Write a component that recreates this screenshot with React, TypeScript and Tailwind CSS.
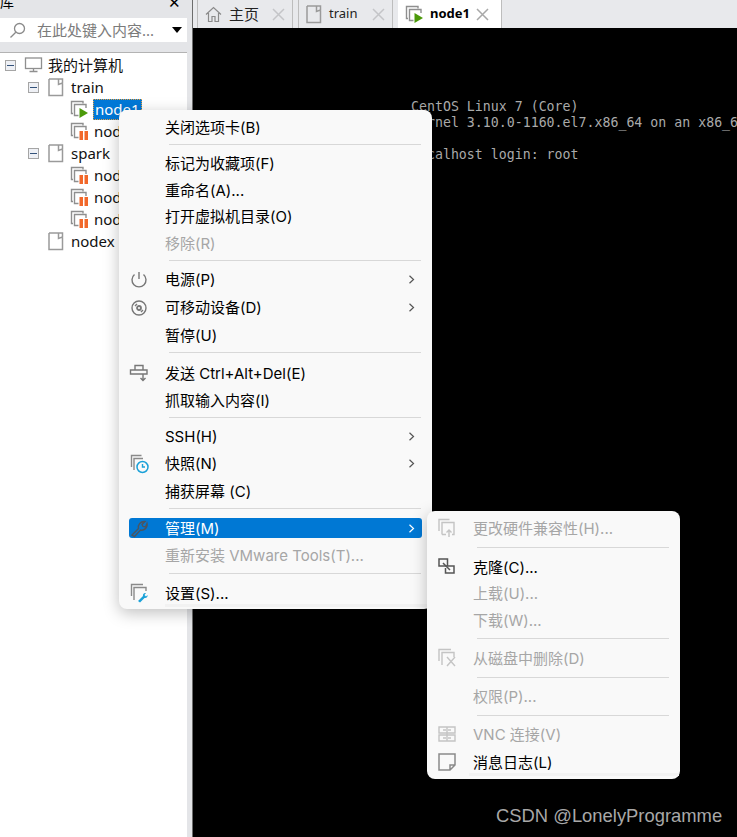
import type { ReactNode } from 'react'

const sans = "font-['Noto_Sans','Noto_Sans_CJK_SC',sans-serif]"
const menuFont = "font-['Inter','Noto_Sans_CJK_SC',sans-serif]"

function VmIcon({ state }: { state: 'run' | 'pause' | 'off' }) {
  return (
    <svg width="19" height="19" viewBox="0 0 19 19" className="shrink-0">
      <path d="M3 13.5H1.5V1.5H13V3.5" fill="none" stroke="#8f8f8f" strokeWidth="1.4" />
      <path d="M8.5 15.5H4.5V4.5H16V8" fill="none" stroke="#8f8f8f" strokeWidth="1.4" />
      {state === 'run' ? <path d="M9.5 8L18 13L9.5 18Z" fill="#4c9a0a" /> : null}
      {state === 'pause' ? (
        <>
          <rect x="9.5" y="9" width="3.5" height="9" fill="#f2682a" />
          <rect x="14.5" y="9" width="3.5" height="9" fill="#f2682a" />
        </>
      ) : null}
    </svg>
  )
}

function DocIcon() {
  return (
    <svg width="16" height="19" viewBox="0 0 16 19" className="shrink-0">
      <path d="M1 1H10.5V6.5L14.5 5V1H10.5M14.5 5V17.5H1V1" fill="none" stroke="#9a9a9a" strokeWidth="1.5" />
    </svg>
  )
}

function Expander() {
  return (
    <span className="flex h-[11px] w-[11px] shrink-0 items-center justify-center border border-[#a5a5a5] bg-[#eef0f5]">
      <span className="h-px w-[7px] bg-[#33527a]" />
    </span>
  )
}

function TreeRow({ pad, children }: { pad: string; children: ReactNode }) {
  return <div className={`flex h-[22px] items-center ${pad}`}>{children}</div>
}

function Sidebar() {
  return (
    <aside className="flex w-[193px] shrink-0 flex-col border-r border-r-[#6d6d6d] bg-[#e4e5e8]">
      <div className="flex h-[18px] items-start justify-between pr-[11px] text-[14px] leading-[12px] text-black">
        <span className="-mt-1">库</span>
        <span className="-mt-1 text-[15px]">✕</span>
      </div>
      <div className="mr-[5px] flex h-[24px] items-center bg-white pl-[9px] pr-[5px]">
        <svg width="17" height="17" viewBox="0 0 17 17" fill="none" stroke="#8a8a8a" strokeWidth="1.3">
          <circle cx="10.5" cy="6.5" r="5" />
          <path d="M6.8 10.2L1.5 15.5" />
        </svg>
        <span className="ml-[11px] flex-1 text-[15px] text-[#7b7b7b]">在此处键入内容...</span>
        <span className="h-0 w-0 border-x-[5.5px] border-t-[6px] border-x-transparent border-t-black" />
      </div>
      <div className="mr-[5px] mt-[10px] flex-1 overflow-hidden border-t border-t-[#b3b3b3] bg-white pt-px text-[15px] text-[#111]">
        <TreeRow pad="pl-[5px]">
          <Expander />
          <svg width="20" height="18" viewBox="0 0 20 18" fill="none" stroke="#8f8f8f" strokeWidth="1.3" className="ml-[8px]">
            <rect x="1.5" y="2" width="16" height="10.5" />
            <path d="M9.5 12.5V15.5M5.5 15.5H13.5" />
          </svg>
          <span className="ml-[4px]">我的计算机</span>
        </TreeRow>
        <TreeRow pad="pl-[28px]">
          <Expander />
          <span className="ml-[9px] flex"><DocIcon /></span>
          <span className="ml-[7px]">train</span>
        </TreeRow>
        <TreeRow pad="pl-[70px]">
          <VmIcon state="run" />
          <span className="ml-[4px] border border-dotted border-[#e8a040] bg-[#0078d7] px-px leading-[19px] text-white">node1</span>
        </TreeRow>
        <TreeRow pad="pl-[70px]">
          <VmIcon state="pause" />
          <span className="ml-[5px]">node2</span>
        </TreeRow>
        <TreeRow pad="pl-[28px]">
          <Expander />
          <span className="ml-[9px] flex"><DocIcon /></span>
          <span className="ml-[7px]">spark</span>
        </TreeRow>
        {['node3', 'node4', 'node5'].map((name) => (
          <TreeRow key={name} pad="pl-[70px]">
            <VmIcon state="pause" />
            <span className="ml-[5px]">{name}</span>
          </TreeRow>
        ))}
        <TreeRow pad="pl-[48px]">
          <DocIcon />
          <span className="ml-[7px]">nodex</span>
        </TreeRow>
      </div>
    </aside>
  )
}

function TabClose({ active }: { active?: boolean }) {
  return (
    <svg width="13" height="13" viewBox="0 0 13 13" stroke={active ? '#a8a8a8' : '#c4c5c8'} strokeWidth="1.5" className="shrink-0">
      <path d="M1 1L12 12M12 1L1 12" />
    </svg>
  )
}

function Tabs() {
  return (
    <div className="flex h-[28px] items-stretch bg-[#e8e9ec] pl-[4px] text-[15px] text-[#222]">
      <div className="flex w-[96px] items-center border-x border-x-[#bdbdbd] pl-[7px]">
        <svg width="17" height="17" viewBox="0 0 17 17" fill="none" stroke="#8a8a8a" strokeWidth="1.2">
          <path d="M1 8.5L8.5 1.5L16 8.5M3.5 7V15.5H7V10.5H10V15.5H13.5V7" />
        </svg>
        <span className="ml-[7px] w-[43px]">主页</span>
        <TabClose />
      </div>
      <div className="ml-[5px] flex w-[95px] items-center border-x border-x-[#bdbdbd] pl-[7px]">
        <DocIcon />
        <span className="ml-[7px] w-[43px] text-[13px]">train</span>
        <TabClose />
      </div>
      <div className="ml-[5px] flex w-[104px] items-center border-r border-r-[#bdbdbd] bg-white pl-[7px] font-bold text-black">
        <VmIcon state="run" />
        <span className="ml-[6px] w-[46px] text-[13px]">node1</span>
        <TabClose active />
      </div>
    </div>
  )
}

function Console() {
  return (
    <div className="flex-1 overflow-hidden whitespace-pre bg-black pl-[218px] pt-[71px] font-['DejaVu_Sans_Mono',monospace] text-[13.25px] leading-[16px] text-[#aaaaaa]">
      <div>CentOS Linux 7 (Core)</div>
      <div>Kernel 3.10.0-1160.el7.x86_64 on an x86_64</div>
      <div>&nbsp;</div>
      <div>localhost login: root</div>
    </div>
  )
}

function Sep({ h = 'h-[9.5px]' }: { h?: string }) {
  return (
    <div className={`flex items-center pl-[50px] pr-[11px] ${h}`}>
      <div className="h-px w-full bg-[#d8d8d8]" />
    </div>
  )
}

type ItemProps = {
  label: string
  icon?: ReactNode
  arrow?: boolean
  off?: boolean
  active?: boolean
  tall?: boolean
}

function Item({ label, icon, arrow, off, active, tall }: ItemProps) {
  const tone = active ? 'bg-[#0078d4] text-white' : off ? 'text-[#a6a6a6]' : 'text-black'
  const size = active ? 'my-[3.25px] h-[20px]' : tall ? 'h-[28px]' : 'h-[26.5px]'
  return (
    <div className={`mx-[10px] flex items-center rounded-[3px] ${size} ${tone}`}>
      <span className="flex w-[36px] shrink-0 items-center justify-start">{icon}</span>
      <span className="flex-1 whitespace-nowrap pt-[2px]">{label}</span>
      {arrow ? (
        <svg width="7" height="9" viewBox="0 0 7 9" fill="none" stroke={active ? '#fff' : '#555'} strokeWidth="1.2" className="mr-[7px]">
          <path d="M1.5 0.8L5.5 4.5L1.5 8.2" />
        </svg>
      ) : null}
    </div>
  )
}

function Glyph({ children }: { children: ReactNode }) {
  return (
    <svg width="20" height="20" viewBox="0 0 20 20" fill="none" stroke="#777" strokeWidth="1.4">
      {children}
    </svg>
  )
}

function MainMenu() {
  return (
    <div className={`absolute left-[119px] top-[110px] h-[499px] w-[313px] rounded-[8px] bg-[#f9f9f9] pt-[4px] text-[15px] shadow-[0_4px_16px_rgba(0,0,0,0.25)] ${menuFont}`}>
      <Item label="关闭选项卡(B)" />
      <Sep h="h-[9.5px] pb-[2px]" />
      <Item label="标记为收藏项(F)" />
      <Item label="重命名(A)..." />
      <Item label="打开虚拟机目录(O)" />
      <Item label="移除(R)" off />
      <Sep />
      <Item tall arrow label="电源(P)" icon={<Glyph><path d="M10 2V9" /><path d="M5.5 4.5A7 7 0 1 0 14.5 4.5" /></Glyph>} />
      <Item tall arrow label="可移动设备(D)" icon={<Glyph><circle cx="10" cy="10" r="7" /><circle cx="10" cy="10" r="2" strokeWidth="1.8" /><path d="M6 8L8 6M12 14L14 12" /></Glyph>} />
      <Item tall label="暂停(U)" />
      <Sep h="h-[9.5px] pb-[4px]" />
      <Item tall label="发送 Ctrl+Alt+Del(E)" icon={<Glyph><path d="M6 2.5H14V7H6ZM1.5 7H18V11H1.5ZM14 11V17M11.5 15L14 17.5L16.5 15" /></Glyph>} />
      <Item label="抓取输入内容(I)" />
      <Sep h="h-[9.5px] pb-[2px]" />
      <Item arrow label="SSH(H)" />
      <Item tall arrow label="快照(N)" icon={
        <Glyph>
          <path d="M2.5 13V1.5H12.5M5 16V4.5H14" stroke="#8a8a8a" />
          <circle cx="13.5" cy="13" r="5.5" stroke="#1ba1d8" strokeWidth="1.5" fill="#f9f9f9" />
          <path d="M13.5 10V13H16" stroke="#1ba1d8" />
        </Glyph>
      } />
      <Item tall label="捕获屏幕 (C)" />
      <Sep h="h-[9.5px] pb-[4px]" />
      <Item active arrow label="管理(M)" icon={
        <Glyph><path d="M3 17L9.5 10.5C8.5 7 11.5 3 16 3.5L13 6.5L14 8.5L16.5 9L18 5.5C19 9.5 15 13 11.5 12L5.5 18.5Z" stroke="#4a5560" /></Glyph>
      } />
      <Item off label="重新安装 VMware Tools(T)..." />
      <Sep h="h-[11px]" />
      <Item tall label="设置(S)..." icon={
        <Glyph>
          <path d="M2.5 13V1.5H14M5 17V4.5H17V8" stroke="#8a8a8a" />
          <path d="M9 18L14 13C13.5 11 15 9.5 17 10L15.5 12L17 13.5L18.5 12C19 14 17 15.5 15.5 15L11 19.5Z" fill="#1ba1d8" stroke="none" />
        </Glyph>
      } />
      <div className="absolute bottom-[2px] left-[46px] right-[4px] h-[3px] bg-[#f2f2f2]" />
    </div>
  )
}

function SubMenu() {
  return (
    <div className={`absolute left-[427px] top-[511px] h-[268px] w-[253px] rounded-[8px] bg-[#f9f9f9] pt-[4px] text-[15px] shadow-[0_4px_16px_rgba(0,0,0,0.25)] ${menuFont}`}>
      <Item off label="更改硬件兼容性(H)..." icon={
        <Glyph>
          <path d="M2 13V1.5H12.5M5 16.5V4.5H17V16.5H15M9 16.5H5" stroke="#c4c4c4" />
          <path d="M12 19V12M9.5 14.5L12 12L14.5 14.5" stroke="#c4c4c4" />
        </Glyph>
      } />
      <Sep h="h-[12px]" />
      <Item label="克隆(C)..." icon={
        <Glyph>
          <path d="M2 2H10.5V9H2ZM8.5 9H17V16H8.5V11" stroke="#555" strokeWidth="1.5" />
          <path d="M6 6L13 13" stroke="#555" strokeWidth="1.5" />
        </Glyph>
      } />
      <Item off label="上载(U)..." />
      <Item off label="下载(W)..." />
      <Sep h="h-[11px]" />
      <Item off tall label="从磁盘中删除(D)" icon={
        <Glyph><path d="M2 13V1.5H14M5 17V4.5H17V9M10 9L18 18M18 9L10 18" stroke="#c4c4c4" /></Glyph>
      } />
      <Sep h="h-[10px]" />
      <Item off tall label="权限(P)..." />
      <Sep h="h-[10px]" />
      <Item off tall label="VNC 连接(V)" icon={
        <Glyph><path d="M2 3H18V9H2ZM2 11H18V17H2ZM10 3V17M6 6H9M11 6H14M6 14H9M11 14H14" stroke="#c4c4c4" /></Glyph>
      } />
      <Item tall label="消息日志(L)" icon={
        <Glyph><path d="M2 2H18V13L13 18H2ZM13 18V13H18" stroke="#8a8a8a" strokeWidth="1.5" /></Glyph>
      } />
      <div className="absolute bottom-[3px] left-[42px] right-[1px] h-[3px] bg-[#f2f2f2]" />
    </div>
  )
}

export default function App() {
  return (
    <div className={`relative flex h-[837px] w-[737px] overflow-hidden bg-black ${sans}`}>
      <Sidebar />
      <main className="flex min-w-0 flex-1 flex-col">
        <Tabs />
        <Console />
      </main>
      <MainMenu />
      <SubMenu />
      <div className="absolute left-[496px] top-[804px] font-['Liberation_Sans',sans-serif] text-[18.4px] leading-[24px] text-[#a8a8a8]">
        CSDN @LonelyProgramme
      </div>
    </div>
  )
}
